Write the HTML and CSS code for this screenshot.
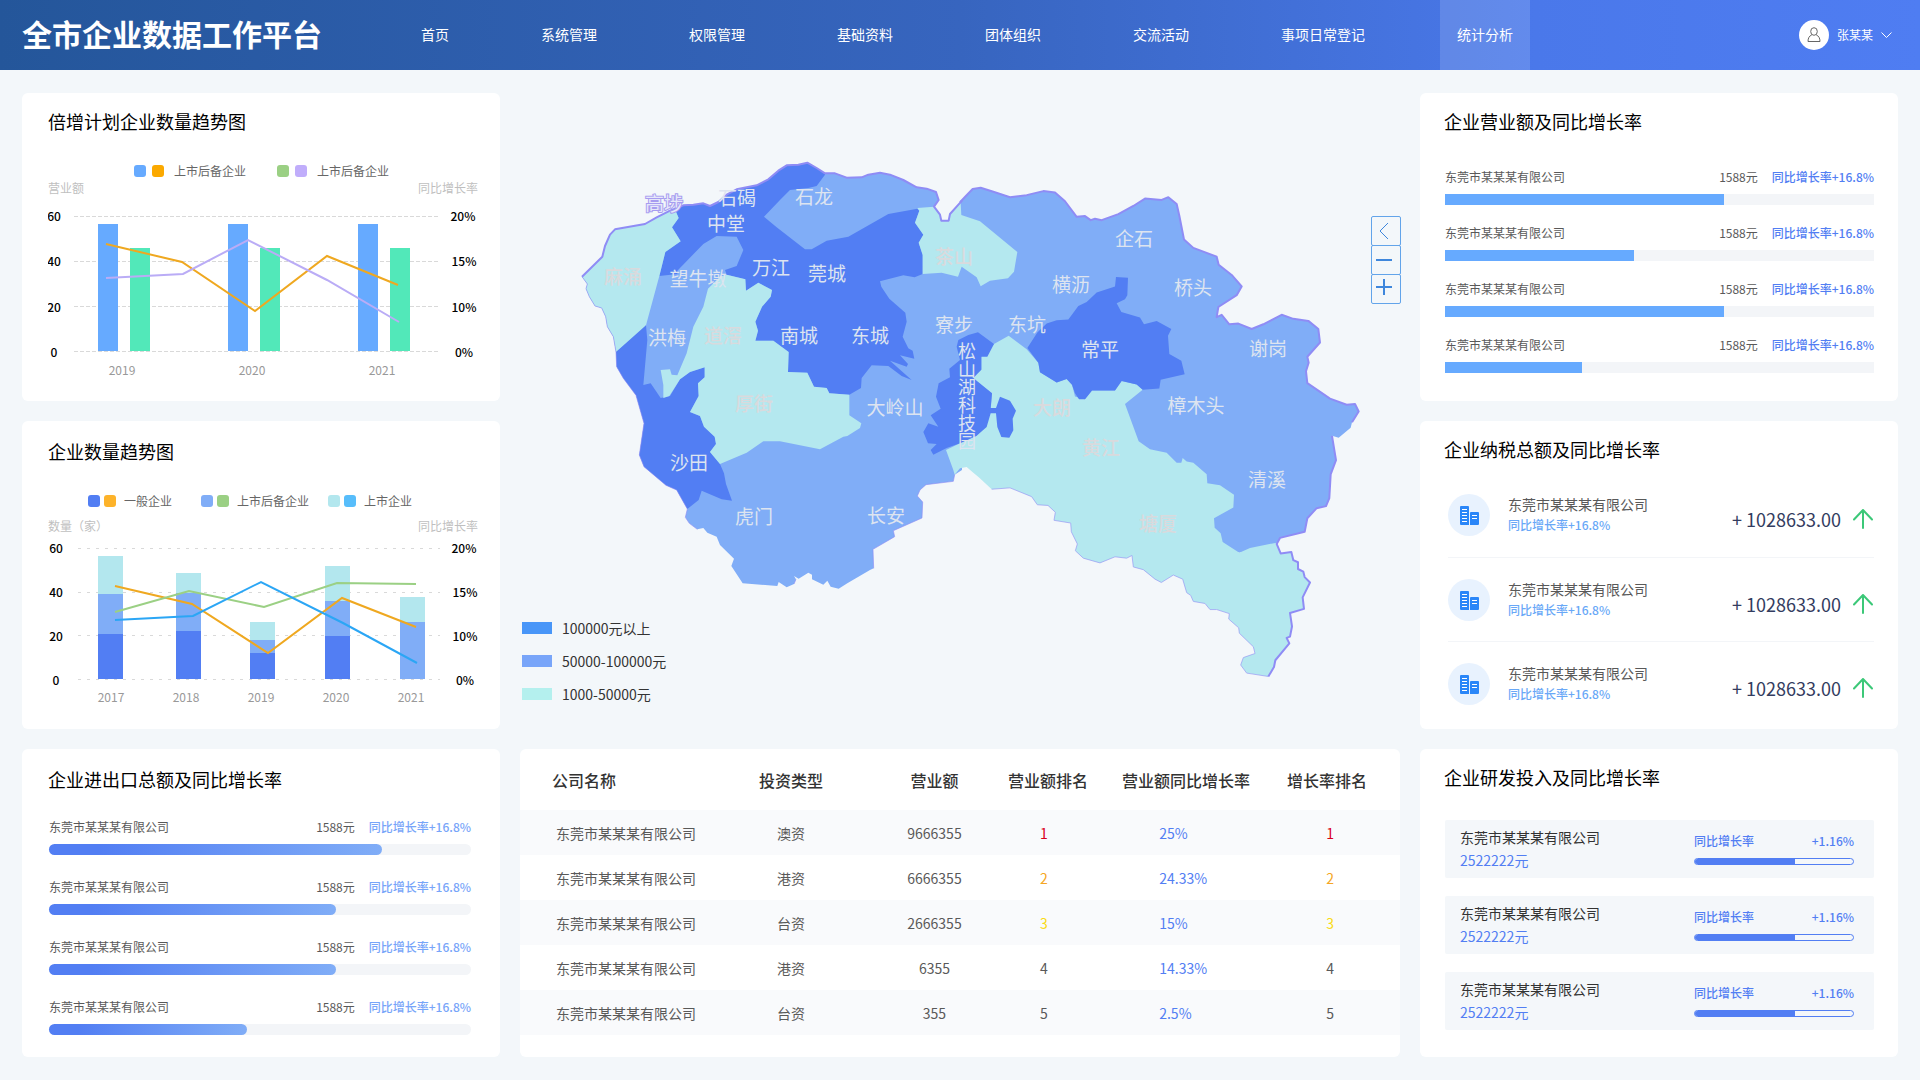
FILE: index.html
```html
<!DOCTYPE html>
<html lang="zh-CN">
<head>
<meta charset="utf-8">
<meta name="viewport" content="width=device-width, initial-scale=1">
<title>全市企业数据工作平台</title>
<link rel="stylesheet" href="styles.css">
</head>
<body>
<svg class="sprite" aria-hidden="true">
  <symbol id="icon-building" viewBox="0 0 20 20">
    <path fill="#2a86f8" d="M2 1h7a1 1 0 0 1 1 1v18H2a1 1 0 0 1-1-1V2a1 1 0 0 1 1-1zM12 7h7a1 1 0 0 1 1 1v11a1 1 0 0 1-1 1h-8V8a1 1 0 0 1 1-1z"/>
    <path stroke="#fff" stroke-width="1" fill="none" d="M3 4.500h5M3 7.500h5M3 10.500h5M3 13.500h5M3 16.500h5M13 10.500h5M13 13.500h5"/>
  </symbol>
  <symbol id="icon-up" viewBox="0 0 20 20">
    <path fill="none" stroke="#3cc878" stroke-width="2" stroke-linecap="round" stroke-linejoin="round" d="M10 19V1M1 10.500L10 1l9 9.500"/>
  </symbol>
</svg>

<header class="topbar">
  <h1 class="brand">全市企业数据工作平台</h1>
  <nav class="nav">
    <a href="#">首页</a>
    <a href="#">系统管理</a>
    <a href="#">权限管理</a>
    <a href="#">基础资料</a>
    <a href="#">团体组织</a>
    <a href="#">交流活动</a>
    <a href="#">事项日常登记</a>
    <a href="#" class="active" aria-current="page">统计分析</a>
  </nav>
  <button type="button" class="user">
    <span class="avatar">
      <svg width="14" height="16" viewBox="0 0 14 16" fill="none" stroke="#666" stroke-width="1"><ellipse cx="7" cy="4.500" rx="3.300" ry="3.800"/><path d="M4.800 7.800C2.300 9 1 11 1 14.500h12c0-3.500-1.300-5.500-3.800-6.700"/></svg>
    </span>
    <span>张某某</span>
    <svg width="11" height="8" viewBox="0 0 11 8" fill="none" stroke="#fff" stroke-width="1"><path d="M.5 1.500l5 5 5-5"/></svg>
  </button>
</header>

<main class="board">
  <section class="panel plan">
    <h2>倍增计划企业数量趋势图</h2>
    <ul class="legend legend-plan">
      <li><i class="c-sky"></i><i class="c-orange"></i><span>上市后备企业</span></li>
      <li><i class="c-green"></i><i class="c-purple"></i><span>上市后备企业</span></li>
    </ul>
    <svg class="chart" viewBox="48 180 430 200" role="img" aria-label="倍增计划企业数量趋势图">
      <g class="axis-name"><text x="48" y="193">营业额</text><text x="478" y="193" text-anchor="end">同比增长率</text></g>
      <path class="grid" d="M74 216.500H440M74 261.500H440M74 306.500H440M74 351.500H440"/>
      <g fill="#66aaff"><rect x="98" y="224" width="20" height="127"/><rect x="228" y="224" width="20" height="127"/><rect x="358" y="224" width="20" height="127"/></g>
      <g fill="#52e8b9"><rect x="130" y="248" width="20" height="103"/><rect x="260" y="248" width="20" height="103"/><rect x="390" y="248" width="20" height="103"/></g>
      <polyline class="line" stroke="#efa820" points="106,244 182,262 255,311 327,256 398,285"/>
      <polyline class="line" stroke="#baacf6" points="106,278 183,274 248,240 327,280 399,322"/>
      <g class="tick" text-anchor="middle"><text x="54" y="221">60</text><text x="54" y="266">40</text><text x="54" y="312">20</text><text x="54" y="357">0</text>
      <text x="463" y="221">20%</text><text x="464" y="266">15%</text><text x="464" y="312">10%</text><text x="464" y="357">0%</text></g>
      <g class="year" text-anchor="middle"><text x="122" y="375">2019</text><text x="252" y="375">2020</text><text x="382" y="375">2021</text></g>
    </svg>
  </section>

  <section class="map" aria-label="企业分布地图">
    <svg class="map-canvas" viewBox="520 93 880 600" role="img" aria-label="东莞市各镇街企业分布">
      <!-- western half of the city -->
      <g transform="translate(560 140) scale(.33333)">
        <path class="mid" d="M1206 182L1170 222L1166 242H1144L1140 224L1122 200L1136 180L1128 156L1100 146L1070 142L1030 120L990 104L960 98L925 104L905 112L860 113L825 100L795 100L770 84L742 68L715 74L680 76L655 92L625 118L590 136L530 148L500 164L475 186L450 198L430 190L400 194L370 196L330 212L290 232L255 252L165 268L150 284L135 318L127 350L66 410L82 432L78 446L88 470L105 498L125 504L137 530L142 560L160 590L168 636L170 680L190 715L228 766L252 850L238 945L252 980L318 1036L350 1050L382 1107L376 1132L388 1150L412 1168L430 1164L442 1178L470 1190L480 1215L522 1256L514 1278L548 1330L652 1338L656 1326L680 1342L702 1332L708 1318L702 1308L716 1316L745 1298L756 1304V1318L790 1334L802 1322L812 1340L836 1346L862 1330L930 1290L941 1285L939 1228L1004 1190L1000 1172L1086 1134L1088 1086L1072 1068L1080 1050L1098 1034L1180 1024L1184 1004L1206 990Z"/>
      </g>
      <!-- eastern half of the city -->
      <g transform="translate(960 160) scale(.33333 .33801)">
        <path class="mid" d="M0 125L22 102L38 86L62 82L100 94L150 110L200 104L250 92L285 96L315 122L350 168L375 166L392 178L405 174L425 178L475 160L520 136L555 114L605 118L625 110L650 130L658 165L672 235L700 260L770 286L776 310L815 340L845 374L830 400L775 435L770 465L785 458L808 486L835 484L875 500L910 486L965 458L1000 470L1045 476L1075 500L1080 540L1042 582L1046 600L1038 625L1042 660L1110 706L1160 724L1185 722L1196 744L1176 776L1172 792L1136 822L1116 816L1128 888L1112 930L1108 1000L1098 1024L1070 1030L1042 1060L1034 1100L960 1118L950 1136L838 1162L0 870Z"/>
        <path class="low" d="M102 544L146 520L200 560L235 600L240 628L290 658L320 648L336 665L345 700L375 708L396 682L465 682L485 654L530 664L548 680L495 722L536 832L570 856L620 866L650 896H664L668 882L680 892L700 896L740 930L742 956L780 962L822 990L820 1028L762 1060L764 1088L782 1104L788 1130L838 1162L870 1148L950 1132L962 1164L994 1160L1000 1184L1014 1190V1210L1030 1218L1034 1234L1050 1250L1028 1294L1032 1328L990 1340L996 1380L990 1410L980 1414L988 1430L946 1480L942 1500L925 1528L860 1518L842 1494L850 1472L885 1460L880 1440L838 1400L836 1384L806 1358L808 1342L770 1330L750 1330L735 1312L700 1306L692 1288L680 1280L668 1240L640 1228L604 1250L585 1240L550 1212L520 1204L516 1170L500 1178L465 1174L420 1192L370 1178L346 1156L352 1136L334 1100L332 1074L282 1066L286 1042L264 1022L232 1020L215 996L150 970L95 974L58 940L40 925L20 908L0 912L-16 931L-20 917L-42 858L0 838L50 816L92 740L96 690L36 645L64 620V582Z"/>
        <path class="high" d="M202 556L232 510L260 484L290 474L325 472L355 432L380 420L410 392L465 374L468 346L504 348L502 400L495 412L470 424L484 450L540 466L552 486L590 476L634 500L624 520L628 574L664 594L674 634L602 650L598 676L548 680L530 664L485 654L465 682H396L375 708H357L345 690L336 665L320 648L290 658L240 628L235 600Z"/>
      </g>
      <g transform="translate(560 140) scale(.33333)">
        <path class="high" d="M795 104L770 138L745 144L690 150L660 180L612 230L650 262L735 328H755L800 302L865 290L985 222L1072 206L1078 212L1065 248L1090 284L1076 308L1088 345V402L1064 412L1030 406L960 424L964 440L988 476L1036 518L1040 545L1028 590L1045 625L1058 632L1063 656L1020 646L1044 672L1040 680L990 662L1055 720L1025 708L985 678L935 676L905 714L903 744L868 764L808 760L800 744L762 740L742 698L684 696L686 636L640 602H586L594 572L586 545L606 500L632 470L636 450L595 428L558 452L556 418L500 404L495 390L530 378L550 330L530 290L470 288L430 312L352 392V402L298 408L316 336L362 304L336 262L356 234L345 210L370 196L400 194L430 190L450 198L475 186L500 164L530 148L590 136L625 118L655 92L680 76L715 74L742 68L770 84L795 100Z"/>
        <path class="low" d="M345 208L356 234L336 262L362 304L316 336L298 408L258 556L240 578L168 636L160 590L142 560L137 530L125 504L105 498L88 470L78 446L82 432L66 410L127 350L135 318L150 284L165 268L255 252L290 232L330 212Z"/>
        <path class="high" d="M168 636L258 556L262 600L250 735L272 730L302 774L330 768L360 718L390 696L434 682V712L414 730L416 768L390 816L420 828L432 860L464 890L468 912L450 936L480 972L492 1000L498 1032L516 1082L485 1078L425 1052L416 1080L382 1107L350 1050L318 1036L252 980L238 945L252 850L228 766L190 715L170 680Z"/>
        <path class="low" d="M500 404L556 418L558 452L595 428L636 450L632 470L606 500L586 545L594 572L586 602H640L686 636L684 696L742 698L762 740L800 744L808 760L868 764V826L904 850L900 864L862 888L850 890L780 928L660 904H610L560 938L480 972L450 936L468 912L464 890L432 860L420 828L390 816L416 768L414 730L434 712V682L390 696L360 718L328 768L310 774V735L302 690L330 688L335 704L352 706L380 640L400 560L430 500L444 446L480 410Z"/>
        <path class="low" d="M1078 212L1072 204L1122 200L1140 224L1144 242H1166L1170 222L1202 188L1204 225L1260 244L1372 336L1362 395L1344 415L1290 422L1262 439L1250 412L1205 380L1194 410L1145 398L1088 402V345L1076 308L1090 284L1065 248Z"/>
        <path class="high" d="M1254 577L1225 585L1195 600L1190 620L1200 660L1168 686L1170 712L1136 730L1128 770L1142 806L1112 826L1135 860L1105 850L1090 876L1104 910L1130 912L1112 930L1120 944L1160 924L1200 910L1250 887L1280 861L1292 820H1308L1312 861L1324 891L1348 893L1360 871L1358 836L1368 812L1350 782L1320 770L1308 804H1292L1296 760L1240 714L1264 689V650L1282 650L1302 612Z"/>
        <path class="border" d="M1206 182L1170 222L1166 242H1144L1140 224L1122 200L1136 180L1128 156L1100 146L1070 142L1030 120L990 104L960 98L925 104L905 112L860 113L825 100L795 100L770 84L742 68L715 74L680 76L655 92L625 118L590 136L530 148L500 164L475 186L450 198L430 190L400 194L370 196L330 212L290 232L255 252L165 268L150 284L135 318L127 350L66 410"/>
        <path class="border thin" d="M66 410L82 432L78 446L88 470L105 498L125 504L137 530L142 560L160 590L168 636L170 680L190 715L228 766L252 850L238 945L252 980L318 1036L350 1050L382 1107L376 1132L388 1150L412 1168M702 1332L708 1318M941 1285L939 1228L1004 1190L1000 1172L1086 1134L1088 1086L1072 1068L1080 1050L1098 1034L1180 1024L1184 1004"/>
      </g>
      <g transform="translate(960 160) scale(.33333 .33801)">
        <path class="border" d="M0 125L22 102L38 86L62 82L100 94L150 110L200 104L250 92L285 96L315 122L350 168L375 166L392 178L405 174L425 178L475 160L520 136L555 114L605 118L625 110L650 130L658 165L672 235L700 260L770 286L776 310L815 340L845 374L830 400L775 435L770 465L785 458L808 486L835 484L875 500L910 486L965 458L1000 470L1045 476L1075 500L1080 540L1042 582L1046 600L1038 625L1042 660L1110 706L1160 724L1185 722L1196 744L1176 776"/>
        <path class="border" d="M1116 816L1128 888L1112 930L1108 1000L1098 1024L1070 1030L1042 1060L1034 1100L960 1118L950 1136L962 1164L994 1160L1000 1184L1014 1190V1210L1030 1218L1034 1234L1050 1250L1028 1294L1032 1328L990 1340L996 1380L990 1410L980 1414L988 1430L946 1480L942 1500L925 1528"/>
        <path class="border thin" d="M925 1528L860 1518L842 1494L850 1472L885 1460L880 1440L838 1400L836 1384L806 1358L808 1342L770 1330L750 1330L735 1312L700 1306L692 1288L680 1280L668 1240L640 1228L604 1250L585 1240L550 1212L520 1204L516 1170L500 1178L465 1174L420 1192L370 1178L346 1156L352 1136L334 1100L332 1074L282 1066L286 1042L264 1022L232 1020L215 996L150 970L95 974"/>
      </g>
      <g class="town" text-anchor="middle">
        <text class="outlined" x="664" y="211">高埗</text><text x="737" y="205">石碣</text><text x="814" y="204">石龙</text><text x="726" y="231">中堂</text>
        <text x="623" y="284" class="faint">麻涌</text><text x="698" y="286">望牛墩</text><text x="771" y="275">万江</text><text x="827" y="281">莞城</text>
        <text x="954" y="264" class="faint">茶山</text><text x="667" y="345">洪梅</text><text x="723" y="343" class="faint">道滘</text><text x="799" y="343">南城</text>
        <text x="870" y="343">东城</text><text x="954" y="332">寮步</text><text x="754" y="411" class="faint">厚街</text><text x="895" y="415">大岭山</text>
        <text x="689" y="470">沙田</text><text x="754" y="524">虎门</text><text x="886" y="523">长安</text><text x="1134" y="246">企石</text>
        <text x="1071" y="292">横沥</text><text x="1193" y="295">桥头</text><text x="1027" y="332">东坑</text><text x="1100" y="357">常平</text>
        <text x="1268" y="356">谢岗</text><text x="1196" y="413">樟木头</text><text x="1052" y="415" class="faint">大朗</text><text x="1101" y="455" class="faint">黄江</text>
        <text x="1267" y="487">清溪</text><text x="1158" y="531" class="faint">塘厦</text>
        <text class="stacked"><tspan x="967" y="358">松</tspan><tspan x="967" y="376">山</tspan><tspan x="967" y="394">湖</tspan><tspan x="967" y="412">科</tspan><tspan x="967" y="430">技</tspan><tspan x="967" y="448">园</tspan></text>
      </g>
    </svg>
    <div class="map-tools">
      <button type="button" aria-label="返回"><svg width="16" height="20" viewBox="0 0 16 20"><path d="M12 2L4 10l8 8" stroke-width="1"/></svg></button>
      <button type="button" aria-label="缩小"><svg width="16" height="20" viewBox="0 0 16 20"><path d="M0 10H16" stroke-width="2"/></svg></button>
      <button type="button" aria-label="放大"><svg width="16" height="20" viewBox="0 0 16 20"><path d="M0 8H16M8 0V16" stroke-width="2"/></svg></button>
    </div>
    <ul class="map-legend">
      <li><i class="range-high"></i>100000元以上</li>
      <li><i class="range-mid"></i>50000-100000元</li>
      <li><i class="range-low"></i>1000-50000元</li>
    </ul>
  </section>

  <section class="panel panel-right revenue">
    <h2>企业营业额及同比增长率</h2>
    <ul class="rates">
      <li><span class="name">东莞市某某某有限公司</span><span>1588元</span><b>同比增长率+16.8%</b><div class="track"><div style="width:65%"></div></div></li>
      <li><span class="name">东莞市某某某有限公司</span><span>1588元</span><b>同比增长率+16.8%</b><div class="track"><div style="width:44%"></div></div></li>
      <li><span class="name">东莞市某某某有限公司</span><span>1588元</span><b>同比增长率+16.8%</b><div class="track"><div style="width:65%"></div></div></li>
      <li><span class="name">东莞市某某某有限公司</span><span>1588元</span><b>同比增长率+16.8%</b><div class="track"><div style="width:32%"></div></div></li>
    </ul>
  </section>

  <section class="panel panel-low trend">
    <h2>企业数量趋势图</h2>
    <ul class="legend legend-trend">
      <li><i class="c-blue"></i><i class="c-amber"></i><span>一般企业</span></li>
      <li><i class="c-mid"></i><i class="c-green"></i><span>上市后备企业</span></li>
      <li><i class="c-cyan"></i><i class="c-azure"></i><span>上市企业</span></li>
    </ul>
    <svg class="chart" viewBox="48 518 430 190" role="img" aria-label="企业数量趋势图">
      <g class="axis-name"><text x="48" y="532">数量（家）</text><text x="478" y="532" text-anchor="end">同比增长率</text></g>
      <path class="grid wide" d="M78 549.500H440M78 593.500H440M78 636.500H440M78 680.500H440"/>
      <g fill="#b3e7ee"><rect x="98" y="557" width="25" height="38"/><rect x="176" y="574" width="25" height="20"/><rect x="250" y="623" width="25" height="18"/><rect x="325" y="567" width="25" height="35"/><rect x="400" y="598" width="25" height="25"/></g>
      <g fill="#80adf7"><rect x="98" y="595" width="25" height="40"/><rect x="176" y="594" width="25" height="38"/><rect x="250" y="641" width="25" height="13"/><rect x="325" y="602" width="25" height="35"/><rect x="400" y="623" width="25" height="57"/></g>
      <g fill="#527ef3"><rect x="98" y="635" width="25" height="45"/><rect x="176" y="632" width="25" height="48"/><rect x="250" y="654" width="25" height="26"/><rect x="325" y="637" width="25" height="43"/></g>
      <polyline class="line" stroke="#efa820" points="115,587 192,605 268,654 342,599 416,628"/>
      <polyline class="line" stroke="#9bd084" points="115,613 189,592 264,608 337,584 416,585"/>
      <polyline class="line" stroke="#2ba6f5" points="115,621 193,617 261,583 343,624 417,664"/>
      <g class="tick" text-anchor="middle"><text x="56" y="554">60</text><text x="56" y="598">40</text><text x="56" y="642">20</text><text x="56" y="686">0</text>
      <text x="464" y="554">20%</text><text x="465" y="598">15%</text><text x="465" y="642">10%</text><text x="465" y="686">0%</text></g>
      <g class="year" text-anchor="middle"><text x="111" y="703">2017</text><text x="186" y="703">2018</text><text x="261" y="703">2019</text><text x="336" y="703">2020</text><text x="411" y="703">2021</text></g>
    </svg>
  </section>

  <section class="panel panel-right tax">
    <h2>企业纳税总额及同比增长率</h2>
    <ul class="taxes">
      <li><span class="badge"><svg width="20" height="20"><use href="#icon-building"/></svg></span><div class="who"><p>东莞市某某某有限公司</p><small>同比增长率+16.8%</small></div><strong>+ 1028633.00</strong><svg class="up" width="20" height="20"><use href="#icon-up"/></svg></li>
      <li><span class="badge"><svg width="20" height="20"><use href="#icon-building"/></svg></span><div class="who"><p>东莞市某某某有限公司</p><small>同比增长率+16.8%</small></div><strong>+ 1028633.00</strong><svg class="up" width="20" height="20"><use href="#icon-up"/></svg></li>
      <li><span class="badge"><svg width="20" height="20"><use href="#icon-building"/></svg></span><div class="who"><p>东莞市某某某有限公司</p><small>同比增长率+16.8%</small></div><strong>+ 1028633.00</strong><svg class="up" width="20" height="20"><use href="#icon-up"/></svg></li>
    </ul>
  </section>

  <section class="panel panel-low trade">
    <h2>企业进出口总额及同比增长率</h2>
    <ul class="rates round">
      <li><span class="name">东莞市某某某有限公司</span><span>1588元</span><b>同比增长率+16.8%</b><div class="track"><div style="width:79%"></div></div></li>
      <li><span class="name">东莞市某某某有限公司</span><span>1588元</span><b>同比增长率+16.8%</b><div class="track"><div style="width:68%"></div></div></li>
      <li><span class="name">东莞市某某某有限公司</span><span>1588元</span><b>同比增长率+16.8%</b><div class="track"><div style="width:68%"></div></div></li>
      <li><span class="name">东莞市某某某有限公司</span><span>1588元</span><b>同比增长率+16.8%</b><div class="track"><div style="width:47%"></div></div></li>
    </ul>
  </section>

  <section class="panel ranking">
    <table>
      <colgroup><col class="w-name"><col class="w-type"><col class="w-sum"><col class="w-rank"><col class="w-growth"><col class="w-last"></colgroup>
      <thead><tr><th>公司名称</th><th>投资类型</th><th>营业额</th><th>营业额排名</th><th>营业额同比增长率</th><th>增长率排名</th></tr></thead>
      <tbody>
        <tr><td>东莞市某某某有限公司</td><td>澳资</td><td>9666355</td><td class="first">1</td><td>25%</td><td class="first">1</td></tr>
        <tr><td>东莞市某某某有限公司</td><td>港资</td><td>6666355</td><td class="second">2</td><td>24.33%</td><td class="second">2</td></tr>
        <tr><td>东莞市某某某有限公司</td><td>台资</td><td>2666355</td><td class="third">3</td><td>15%</td><td class="third">3</td></tr>
        <tr><td>东莞市某某某有限公司</td><td>港资</td><td>6355</td><td>4</td><td>14.33%</td><td>4</td></tr>
        <tr><td>东莞市某某某有限公司</td><td>台资</td><td>355</td><td>5</td><td>2.5%</td><td>5</td></tr>
      </tbody>
    </table>
  </section>

  <section class="panel panel-right research">
    <h2>企业研发投入及同比增长率</h2>
    <ul class="funds">
      <li><div class="fund"><p>东莞市某某某有限公司</p><b>2522222元</b></div><div class="gain"><div class="gain-text"><span>同比增长率</span><span>+1.16%</span></div><div class="meter"><div style="width:63%"></div></div></div></li>
      <li><div class="fund"><p>东莞市某某某有限公司</p><b>2522222元</b></div><div class="gain"><div class="gain-text"><span>同比增长率</span><span>+1.16%</span></div><div class="meter"><div style="width:63%"></div></div></div></li>
      <li><div class="fund"><p>东莞市某某某有限公司</p><b>2522222元</b></div><div class="gain"><div class="gain-text"><span>同比增长率</span><span>+1.16%</span></div><div class="meter"><div style="width:63%"></div></div></div></li>
    </ul>
  </section>
</main>
</body>
</html>
```
FILE: styles.css
```css
* { box-sizing: border-box; }

body {
  margin: 0;
  background: #f3f7fa;
  color: #595959;
  font: 12px/20px "Noto Sans CJK SC", "Noto Sans", sans-serif;
}

h1, h2, p, ul { margin: 0; padding: 0; }
ul { list-style: none; }
i, b, strong, small { font-style: normal; font-weight: 400; }
button { font: inherit; cursor: pointer; }
.sprite { display: none; }

/* Top bar */
.topbar {
  display: flex;
  align-items: center;
  height: 70px;
  padding: 0 28px 0 22px;
  background: linear-gradient(90deg, #24569a, #3765bf 50%, #4a78ea 80%, #4f7df2);
  color: #fff;
}
.brand { width: 382px; padding-bottom: 4px; font-size: 30px; line-height: 40px; font-weight: 700; }
.nav { display: flex; gap: 58px; align-self: stretch; }
.nav a {
  padding: 0 17px;
  color: #fff;
  font-size: 14px;
  line-height: 68px;
  text-decoration: none;
  white-space: nowrap;
}
.nav .active { background: rgba(255, 255, 255, .14); }
.user {
  display: flex;
  align-items: center;
  gap: 8px;
  margin-left: auto;
  padding: 0;
  border: 0;
  background: none;
  color: #fff;
}
.avatar {
  display: grid;
  place-items: center;
  width: 30px;
  height: 30px;
  border-radius: 50%;
  background: #fff;
}

/* Dashboard grid */
.board {
  display: grid;
  grid-template-columns: 478px minmax(0, 1fr) 478px;
  grid-template-areas:
    "plan map revenue"
    "trend map tax"
    "trade ranking research";
  grid-auto-rows: minmax(308px, auto);
  gap: 20px;
  padding: 23px 22px;
}
.plan { grid-area: plan; }
.map { grid-area: map; }
.revenue { grid-area: revenue; }
.trend { grid-area: trend; }
.tax { grid-area: tax; }
.trade { grid-area: trade; }
.ranking { grid-area: ranking; }
.research { grid-area: research; }

.panel { padding: 14px 22px 0 26px; border-radius: 6px; background: #fff; }
.panel-low { padding-top: 16px; }
.panel-right { padding: 14px 24px 0; }
.panel h2 { color: #000; font-size: 18px; line-height: 28px; font-weight: 400; }

/* Charts */
.legend { display: grid; margin-top: 26px; color: #666; }
.legend-plan { grid-template-columns: 143px auto; padding-left: 86px; }
.legend-trend { grid-template-columns: 113px 127px auto; margin-bottom: 7px; padding-left: 40px; }
.legend li { display: flex; align-items: center; gap: 6px; white-space: nowrap; }
.legend-trend li { gap: 4px; }
.legend i { width: 12px; height: 12px; border-radius: 3px; }
.legend span { padding-left: 4px; }
.c-sky { background: #66aaff; }
.c-orange { background: #fba900; }
.c-green { background: #9bd084; }
.c-purple { background: #c0adfb; }
.c-blue { background: #527ef3; }
.c-amber { background: #fdb32a; }
.c-mid { background: #80adf7; }
.c-cyan { background: #b3e7ee; }
.c-azure { background: #57bdfb; }

.chart { display: block; width: 100%; margin-top: -1px; }
.chart text { font-size: 12px; }
.axis-name { fill: #bfbfbf; }
.tick { fill: #000; font-weight: 500; }
.year { fill: #999; }
.grid { fill: none; stroke: #d9d9d9; stroke-dasharray: 4 2; }
.grid.wide { stroke-dasharray: 3 6; }
.line { fill: none; stroke-width: 2; }

/* Map */
.map { position: relative; }
.map-canvas { display: block; width: 100%; }
.mid { fill: #80adf7; }
.low { fill: #b4e8ef; }
.high { fill: #527ef3; }
.border { fill: none; stroke: #8f8cf5; stroke-width: 2; stroke-linejoin: round; vector-effect: non-scaling-stroke; }
.border.thin { stroke-width: 1; opacity: .6; }
.town { fill: #dde4f0; font-size: 19px; }
.town .faint { fill: #d9dadd; font-weight: 500; }
.town .stacked { font-size: 18px; }
.town .outlined { fill: #e6e8fa; stroke: #a79cf0; stroke-width: 2px; paint-order: stroke; }

.map-tools { position: absolute; top: 123px; right: -1px; display: flex; flex-direction: column; }
.map-tools button {
  display: grid;
  place-items: center;
  width: 30px;
  height: 30px;
  margin-bottom: -1px;
  padding: 0 6px 0 0;
  border: 1px solid #62a4ea;
  border-radius: 2px;
  background: none;
}
.map-tools svg { fill: none; stroke: #3f87dc; margin-left: 2px; }

.map-legend {
  position: absolute;
  bottom: 25px;
  left: 2px;
  display: grid;
  gap: 13px;
  color: #333;
  font-size: 14px;
}
.map-legend li { display: flex; align-items: center; gap: 10px; }
.map-legend i { width: 30px; height: 12px; }
.range-high { background: #4896f8; }
.range-mid { background: #78a5f9; }
.range-low { background: #b4f0ee; }

/* Company bars */
.rates { display: grid; gap: 18px; margin: 32px 0 0 1px; }
.rates li {
  display: grid;
  grid-template-columns: 1fr auto auto;
  column-gap: 14px;
  row-gap: 7px;
}
.rates b { color: #527ef3; font-weight: 500; }
.track { grid-column: 1 / -1; height: 11px; background: #f3f5f8; }
.track div { height: 100%; background: #66aaff; }
.round { gap: 22px; margin: 24px 7px 0 1px; }
.round b { color: #78a5f9; }
.round .track, .round .track div { border-radius: 6px; }
.round .track div { background: linear-gradient(90deg, #527ef3 15%, #80adf7); }

/* Tax list */
.taxes { margin: 10px 0 0 4px; }
.taxes li { display: flex; align-items: center; height: 84px; }
.taxes li + li { border-top: 1px solid #f3f5f8; }
.badge {
  display: grid;
  place-items: center;
  width: 42px;
  height: 42px;
  border-radius: 50%;
  background: #e8f2fe;
}
.who { flex: 1; padding: 0 0 2px 18px; }
.who p { font-size: 14px; line-height: 22px; }
.who small { display: block; color: #69a8f7; font-size: 12px; font-weight: 500; }
.taxes strong { color: #333c60; font-size: 18px; line-height: 28px; padding-top: 8px; }
.up { margin: 8px 1px 0 12px; }

/* Ranking table */
.panel.ranking { padding: 0; }
.ranking table { width: 100%; table-layout: fixed; border-collapse: collapse; text-align: center; }
.w-name { width: 22.6%; }
.w-type { width: 16.4%; }
.w-sum { width: 16.2%; }
.w-rank { width: 9.6%; }
.w-growth { width: 21.8%; }
.w-last { width: 13.4%; }
.ranking th, .ranking td { padding: 0; white-space: nowrap; }
.ranking th { height: 61px; color: #333; font-size: 16px; font-weight: 500; }
.ranking td { height: 45px; font-size: 14px; }
.ranking tbody tr:nth-child(odd) { background: #f9fafc; }
.ranking th:first-child { padding-left: 32px; text-align: left; }
.ranking td:first-child { padding-left: 36px; text-align: left; }
.ranking td:nth-child(4) { padding-right: 8px; }
.ranking td:nth-child(5) { padding-left: 69px; color: #527ef3; text-align: left; }
.ranking th:last-child { padding-right: 28px; }
.ranking td:last-child { padding-right: 22px; }
.ranking .first { color: #d9001b; }
.ranking .second { color: #f5a623; }
.ranking .third { color: #fadb14; }

/* Research funding */
.funds { display: grid; gap: 18px; margin: 29px 0 0 1px; }
.funds li {
  display: flex;
  justify-content: space-between;
  align-items: center;
  height: 58px;
  padding: 0 20px 0 15px;
  border-radius: 2px;
  background: #f4f7fa;
}
.fund { color: #333; font-size: 14px; line-height: 23px; }
.fund b { color: #527ef3; }
.gain { width: 160px; padding-bottom: 3px; color: #527ef3; font-weight: 500; }
.gain-text { display: flex; justify-content: space-between; margin-bottom: 7px; }
.meter { height: 7px; border: 1px solid #527ef3; border-radius: 4px; overflow: hidden; }
.meter div { height: 100%; background: #527ef3; }
```
